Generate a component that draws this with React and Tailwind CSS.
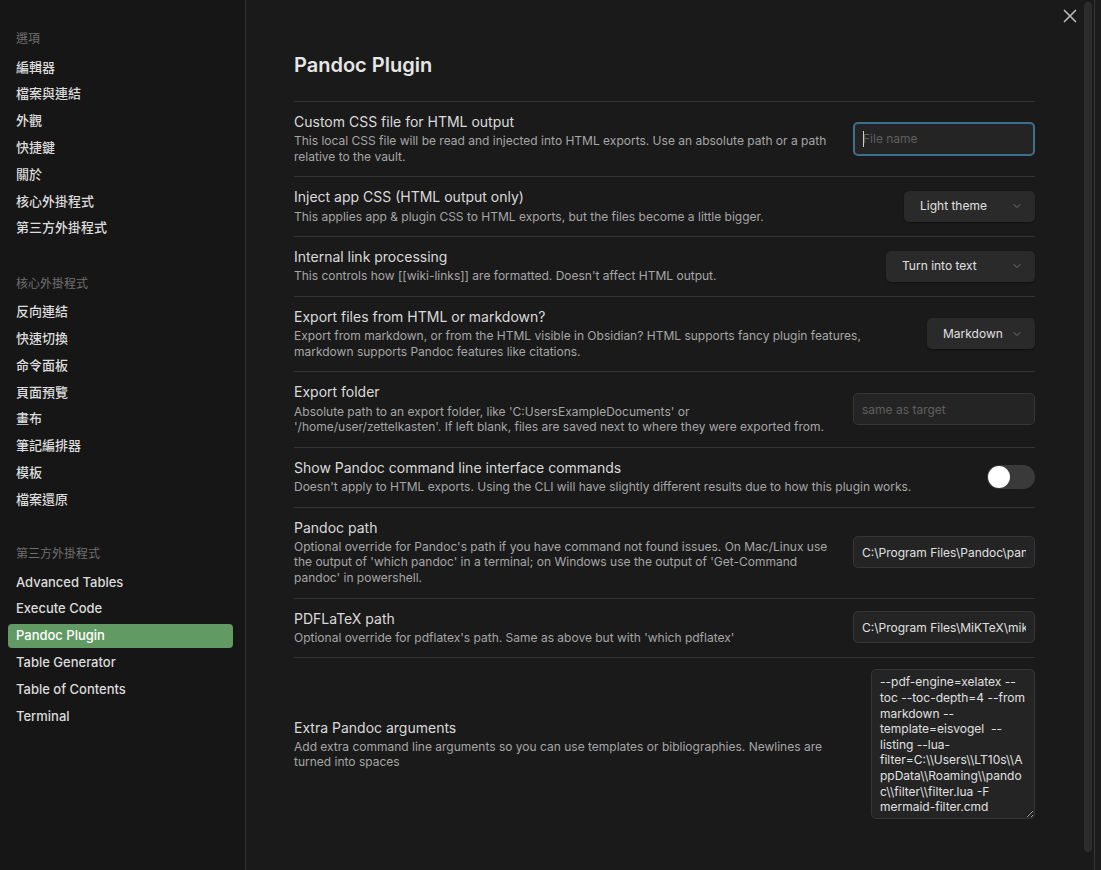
import React from "react";
import { X, ChevronDown } from "lucide-react";

const FONT = { fontFamily: 'Inter, "Noto Sans CJK TC", "Noto Sans", sans-serif' };

const groups = [
  {
    title: "選項",
    items: ["編輯器", "檔案與連結", "外觀", "快捷鍵", "關於", "核心外掛程式", "第三方外掛程式"],
    gap: "mb-[35px]",
  },
  {
    title: "核心外掛程式",
    items: ["反向連結", "快速切換", "命令面板", "頁面預覽", "畫布", "筆記編排器", "模板", "檔案還原"],
    gap: "mb-[34px]",
  },
  {
    title: "第三方外掛程式",
    items: ["Advanced Tables", "Execute Code", "Pandoc Plugin", "Table Generator", "Table of Contents", "Terminal"],
    gap: "",
  },
];

function Sidebar() {
  return (
    <aside className="w-[246px] shrink-0 bg-[#161616] border-r border-[#333333] pt-[31px] pl-2 pr-3">
      {groups.map((g) => (
        <div key={g.title} className={g.gap}>
          <div className="px-2 h-4 leading-4 text-[12px] text-[#6f6f6f] mb-[8px]">{g.title}</div>
          <div className="flex flex-col gap-[2px]">
            {g.items.map((item) => (
              <div
                key={item}
                className={
                  item === "Pandoc Plugin"
                    ? "h-[24.8px] px-2 flex items-center rounded-[4px] bg-[#629a64] text-white text-[13px] font-medium"
                    : "h-[24.8px] px-2 flex items-center rounded-[4px] text-[#dcdcdc] text-[13px] font-medium"
                }
              >
                {item}
              </div>
            ))}
          </div>
        </div>
      ))}
    </aside>
  );
}

function Row({ name, desc, children }) {
  return (
    <div className="flex items-center pt-[11px] pb-3 border-t border-[#333333]">
      <div className="flex-1 min-w-0 mr-4">
        <div className="text-[14px] leading-[18.2px] text-[#dadada]">{name}</div>
        <div className="pt-[2px] text-[12px] leading-[15.6px] text-[#a6a6a6]">{desc}</div>
      </div>
      <div className="shrink-0 flex justify-end">{children}</div>
    </div>
  );
}

function Dropdown({ label, width }) {
  return (
    <div
      className={`${width} h-[31px] rounded-[5px] bg-[#2a2a2a] shadow-[0_1px_2px_rgba(0,0,0,0.4)] flex items-center justify-between pl-4 pr-3 text-[12px] text-[#e0e0e0]`}
    >
      <span>{label}</span>
      <ChevronDown size={12} strokeWidth={1.5} className="text-[#8a8a8a]" />
    </div>
  );
}

function TextInput({ value, placeholder, focused }) {
  if (focused) {
    return (
      <div className="relative">
        <input
          readOnly
          value={value || ""}
          placeholder={placeholder}
          className="w-[182px] h-[34px] rounded-[5px] bg-[#242424] border-2 border-[#3f6f8f] px-2 text-[12px] text-[#dadada] placeholder:text-[#5f5f5f] outline-none"
          style={FONT}
        />
        <span className="absolute left-[10px] top-[9px] w-px h-[16px] bg-[#cfcfcf]" />
      </div>
    );
  }
  return (
    <input
      readOnly
      value={value || ""}
      placeholder={placeholder}
      className="w-[182px] h-[32px] rounded-[5px] bg-[#242424] border border-[#363636] px-2 text-[12px] text-[#e0e0e0] placeholder:text-[#5f5f5f] outline-none"
      style={FONT}
    />
  );
}

export default function App() {
  const extraArgs =
    "--pdf-engine=xelatex --toc --toc-depth=4 --from markdown --template=eisvogel  --listing --lua-filter=C:\\\\Users\\\\LT10s\\\\AppData\\\\Roaming\\\\pandoc\\\\filter\\\\filter.lua -F mermaid-filter.cmd";

  return (
    <div className="relative h-[870px] w-[1101px] flex bg-[#1a1a1a] overflow-hidden" style={FONT}>
      <Sidebar />

      <main className="flex-1 flex min-w-0">
        <div className="flex-1 min-w-0 pl-12 pr-[49px] pt-[52px]">
          <h1 className="text-[20px] leading-[26px] font-semibold text-[#e6e6e6] mb-[23px]">Pandoc Plugin</h1>

          <Row
            name="Custom CSS file for HTML output"
            desc="This local CSS file will be read and injected into HTML exports. Use an absolute path or a path relative to the vault."
          >
            <TextInput placeholder="File name" focused />
          </Row>

          <Row
            name="Inject app CSS (HTML output only)"
            desc="This applies app & plugin CSS to HTML exports, but the files become a little bigger."
          >
            <Dropdown label="Light theme" width="w-[131px]" />
          </Row>

          <Row
            name="Internal link processing"
            desc="This controls how [[wiki-links]] are formatted. Doesn't affect HTML output."
          >
            <Dropdown label="Turn into text" width="w-[149px]" />
          </Row>

          <Row
            name="Export files from HTML or markdown?"
            desc="Export from markdown, or from the HTML visible in Obsidian? HTML supports fancy plugin features, markdown supports Pandoc features like citations."
          >
            <Dropdown label="Markdown" width="w-[108px]" />
          </Row>

          <Row
            name="Export folder"
            desc="Absolute path to an export folder, like 'C:UsersExampleDocuments' or '/home/user/zettelkasten'. If left blank, files are saved next to where they were exported from."
          >
            <TextInput placeholder="same as target" />
          </Row>

          <Row
            name="Show Pandoc command line interface commands"
            desc="Doesn't apply to HTML exports. Using the CLI will have slightly different results due to how this plugin works."
          >
            <div className="w-[48px] h-[24px] rounded-full bg-[#3a3a3a] flex items-center px-[1px]">
              <div className="w-[22px] h-[22px] rounded-full bg-white" />
            </div>
          </Row>

          <Row
            name="Pandoc path"
            desc="Optional override for Pandoc's path if you have command not found issues. On Mac/Linux use the output of 'which pandoc' in a terminal; on Windows use the output of 'Get-Command pandoc' in powershell."
          >
            <TextInput value="C:\Program Files\Pandoc\pandoc.exe" />
          </Row>

          <Row
            name="PDFLaTeX path"
            desc="Optional override for pdflatex's path. Same as above but with 'which pdflatex'"
          >
            <TextInput value="C:\Program Files\MiKTeX\miktex\bin\x64\pdflatex.exe" />
          </Row>

          <Row
            name="Extra Pandoc arguments"
            desc="Add extra command line arguments so you can use templates or bibliographies. Newlines are turned into spaces"
          >
            <textarea
              readOnly
              value={extraArgs}
              className="w-[164px] h-[150px] rounded-[5px] bg-[#242424] border border-[#363636] pl-2 pr-[6px] py-[4px] text-[12px] leading-[15.6px] text-[#e0e0e0] outline-none resize-y"
              style={FONT}
            />
          </Row>
        </div>

        <div className="w-[10px] shrink-0 pt-[2px]">
          <div className="w-[8px] h-[850px] rounded-full bg-[#2c2c2c]" />
        </div>
        <div className="w-[1px] shrink-0 bg-[#363636]" />
        <div className="w-[6px] shrink-0 bg-[#1c1c1c]" />
      </main>

      <button className="absolute top-[5px] right-[20px] text-[#b8b8b8]">
        <X size={22} strokeWidth={1.8} />
      </button>
    </div>
  );
}
